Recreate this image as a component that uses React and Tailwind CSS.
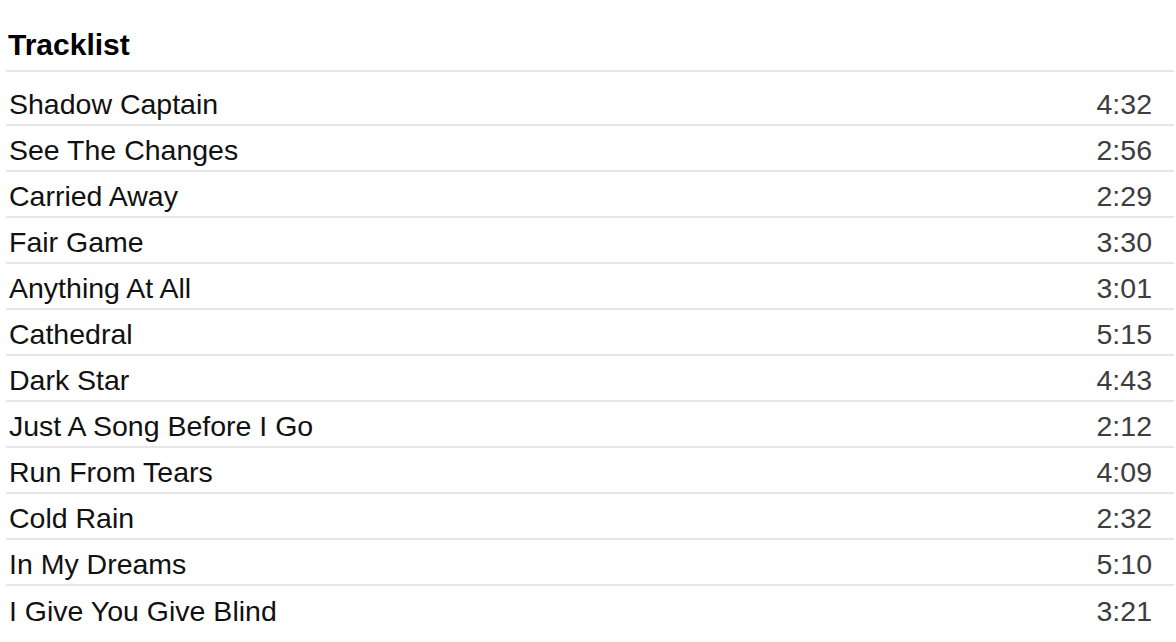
import React from "react";

const TRACKS = [
  { title: "Shadow Captain", length: "4:32" },
  { title: "See The Changes", length: "2:56" },
  { title: "Carried Away", length: "2:29" },
  { title: "Fair Game", length: "3:30" },
  { title: "Anything At All", length: "3:01" },
  { title: "Cathedral", length: "5:15" },
  { title: "Dark Star", length: "4:43" },
  { title: "Just A Song Before I Go", length: "2:12" },
  { title: "Run From Tears", length: "4:09" },
  { title: "Cold Rain", length: "2:32" },
  { title: "In My Dreams", length: "5:10" },
  { title: "I Give You Give Blind", length: "3:21" },
];

export default function App() {
  return (
    <div
      className="min-h-screen bg-white text-black"
      style={{ fontFamily: '"Liberation Sans", Arial, sans-serif' }}
    >
      <section className="ml-[6px] mr-[2px] pt-[30px]">
        {/* Header */}
        <h2 className="text-[30px] font-bold leading-[30px] pl-[2px] pb-[10px] border-b-2 border-[#e6e6e6] mb-[8px]">
          Tracklist
        </h2>

        {/* Track rows */}
        <ul>
          {TRACKS.map((t, i) => (
            <li
              key={t.title}
              className={
                "h-[46px] flex items-center justify-between pl-[3px] pr-[22px] pt-[3px] text-[28.5px] leading-[32px] " +
                (i < TRACKS.length - 1 ? "border-b-2 border-[#e6e6e6]" : "")
              }
            >
              <span className="text-[#111]">{t.title}</span>
              <span className="text-[#3d3d3d]">{t.length}</span>
            </li>
          ))}
        </ul>
      </section>
    </div>
  );
}
